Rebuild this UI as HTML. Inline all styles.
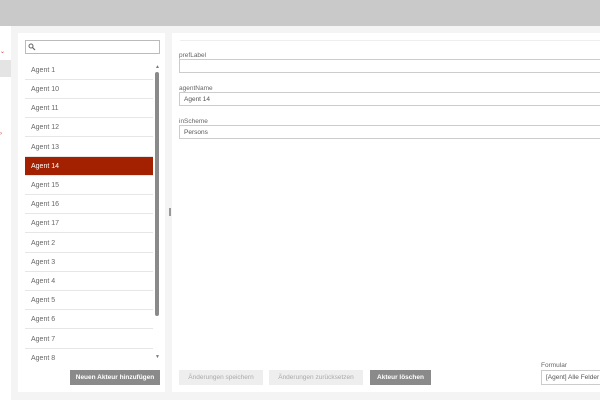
<!DOCTYPE html>
<html><head><style>
*{box-sizing:border-box;margin:0;padding:0}
body{width:600px;height:400px;overflow:hidden;background:#f4f4f4;font-family:"Liberation Sans",sans-serif;font-size:7px;color:#555;position:relative}
.a{position:absolute}
.top{left:0;top:0;width:600px;height:26px;background:#c9c9c9}
.side{left:0;top:26px;width:11px;height:374px;background:#fff}
.pl{left:18px;top:33px;width:147px;height:359px;background:#fff}
.pr{left:172px;top:33px;width:428px;height:359px;background:#fff}
.item{position:absolute;left:25px;width:128px;height:19px;border-bottom:1px solid #e6e6e6;padding-left:6px;line-height:20px;color:#666;background:#fff}
.sel{background:#a32100;color:#fff}
.inp{position:absolute;left:179px;width:430px;height:14px;border:1px solid #ccc;background:#fff;padding-left:4px;line-height:13px;font-size:6.5px;color:#555}
.lab{position:absolute;left:179px;font-size:6.5px;color:#666}
.btn{position:absolute;top:370px;height:15px;line-height:15px;text-align:center;font-size:6.5px;background:#eee;color:#aaa}
.dk{background:#8a8a8a;color:#fff;font-weight:bold}
</style></head><body>
<div class="a top"></div>
<div class="a side"></div>
<div class="a" style="left:0;top:60px;width:11px;height:17px;background:#e4e4e4"></div>
<div class="a" style="left:0;top:48px;font-size:6px;color:#c44">⌄</div>
<div class="a" style="left:0;top:131px;font-size:6px;color:#c44">›</div>
<div class="a pl"></div>
<div class="a pr"></div>
<div class="a" style="left:25px;top:40px;width:135px;height:14px;border:1px solid #bbb;background:#fff"></div>
<svg class="a" style="left:28px;top:43px" width="8" height="8"><circle cx="3" cy="3" r="2" fill="none" stroke="#666" stroke-width="1"/><line x1="4.5" y1="4.5" x2="7" y2="7" stroke="#666" stroke-width="1.2"/></svg>
<div class="item" style="top:61px">Agent 1</div>
<div class="item" style="top:80px">Agent 10</div>
<div class="item" style="top:99px">Agent 11</div>
<div class="item" style="top:118px">Agent 12</div>
<div class="item" style="top:138px">Agent 13</div>
<div class="item sel" style="top:157px">Agent 14</div>
<div class="item" style="top:176px">Agent 15</div>
<div class="item" style="top:195px">Agent 16</div>
<div class="item" style="top:214px">Agent 17</div>
<div class="item" style="top:234px">Agent 2</div>
<div class="item" style="top:253px">Agent 3</div>
<div class="item" style="top:272px">Agent 4</div>
<div class="item" style="top:291px">Agent 5</div>
<div class="item" style="top:310px">Agent 6</div>
<div class="item" style="top:330px">Agent 7</div>
<div class="item" style="top:349px;border:none">Agent 8</div>
<div class="a" style="left:155px;top:72px;width:4px;height:244px;background:#8a8a8a;border-radius:2px"></div>
<div class="a" style="left:155px;top:64px;font-size:5px;color:#777">▲</div>
<div class="a" style="left:155px;top:354px;font-size:5px;color:#777">▼</div>
<div class="btn dk" style="left:70px;width:90px">Neuen Akteur hinzufügen</div>
<div class="a" style="left:169px;top:208px;width:2px;height:8px;background:#999"></div>
<div class="a" style="left:180px;top:40px;width:420px;height:1px;background:#eee"></div>
<div class="lab" style="top:52px">prefLabel</div>
<div class="inp" style="top:59px"></div>
<div class="lab" style="top:85px">agentName</div>
<div class="inp" style="top:92px">Agent 14</div>
<div class="lab" style="top:118px">inScheme</div>
<div class="inp" style="top:125px">Persons</div>
<div class="btn" style="left:179px;width:84px">Änderungen speichern</div>
<div class="btn" style="left:269px;width:94px">Änderungen zurücksetzen</div>
<div class="btn dk" style="left:370px;width:61px">Akteur löschen</div>
<div class="lab" style="left:541px;top:362px">Formular</div>
<div class="inp" style="left:541px;top:370px;height:15px;line-height:13px;width:70px">[Agent] Alle Felder</div>
</body></html>
